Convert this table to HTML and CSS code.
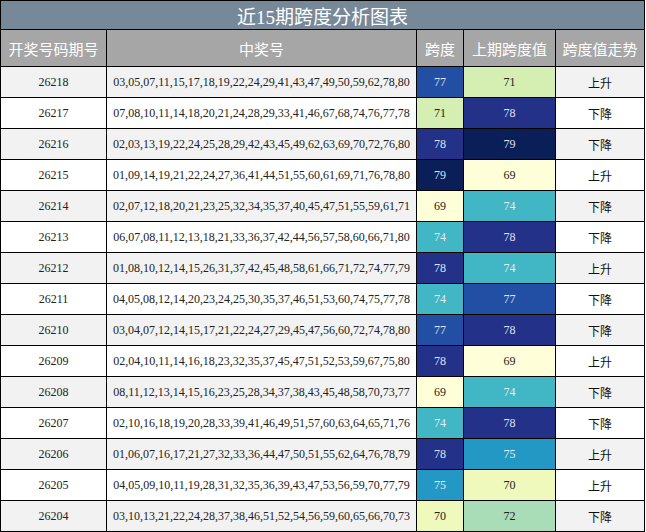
FILE: index.html
```html
<!DOCTYPE html>
<html lang="zh">
<head>
<meta charset="utf-8">
<title>近15期跨度分析图表</title>
<link rel="stylesheet" href="styles.css">
</head>
<body>
<div class="chart">
  <div class="title">近15期跨度分析图表</div>
  <div class="hd">开奖号码期号</div>
  <div class="hd">中奖号</div>
  <div class="hd">跨度</div>
  <div class="hd">上期跨度值</div>
  <div class="hd">跨度值走势</div>

  <div class="cell g">26218</div><div class="cell g">03,05,07,11,15,17,18,19,22,24,29,41,43,47,49,50,59,62,78,80</div><div class="cell v77">77</div><div class="cell v71">71</div><div class="cell g cn">上升</div>
  <div class="cell">26217</div><div class="cell">07,08,10,11,14,18,20,21,24,28,29,33,41,46,67,68,74,76,77,78</div><div class="cell v71">71</div><div class="cell v78">78</div><div class="cell cn">下降</div>
  <div class="cell g">26216</div><div class="cell g">02,03,13,19,22,24,25,28,29,42,43,45,49,62,63,69,70,72,76,80</div><div class="cell v78">78</div><div class="cell v79">79</div><div class="cell g cn">下降</div>
  <div class="cell">26215</div><div class="cell">01,09,14,19,21,22,24,27,36,41,44,51,55,60,61,69,71,76,78,80</div><div class="cell v79">79</div><div class="cell v69">69</div><div class="cell cn">上升</div>
  <div class="cell g">26214</div><div class="cell g">02,07,12,18,20,21,23,25,32,34,35,37,40,45,47,51,55,59,61,71</div><div class="cell v69">69</div><div class="cell v74">74</div><div class="cell g cn">下降</div>
  <div class="cell">26213</div><div class="cell">06,07,08,11,12,13,18,21,33,36,37,42,44,56,57,58,60,66,71,80</div><div class="cell v74">74</div><div class="cell v78">78</div><div class="cell cn">下降</div>
  <div class="cell g">26212</div><div class="cell g">01,08,10,12,14,15,26,31,37,42,45,48,58,61,66,71,72,74,77,79</div><div class="cell v78">78</div><div class="cell v74">74</div><div class="cell g cn">上升</div>
  <div class="cell">26211</div><div class="cell">04,05,08,12,14,20,23,24,25,30,35,37,46,51,53,60,74,75,77,78</div><div class="cell v74">74</div><div class="cell v77">77</div><div class="cell cn">下降</div>
  <div class="cell g">26210</div><div class="cell g">03,04,07,12,14,15,17,21,22,24,27,29,45,47,56,60,72,74,78,80</div><div class="cell v77">77</div><div class="cell v78">78</div><div class="cell g cn">下降</div>
  <div class="cell">26209</div><div class="cell">02,04,10,11,14,16,18,23,32,35,37,45,47,51,52,53,59,67,75,80</div><div class="cell v78">78</div><div class="cell v69">69</div><div class="cell cn">上升</div>
  <div class="cell g">26208</div><div class="cell g">08,11,12,13,14,15,16,23,25,28,34,37,38,43,45,48,58,70,73,77</div><div class="cell v69">69</div><div class="cell v74">74</div><div class="cell g cn">下降</div>
  <div class="cell">26207</div><div class="cell">02,10,16,18,19,20,28,33,39,41,46,49,51,57,60,63,64,65,71,76</div><div class="cell v74">74</div><div class="cell v78">78</div><div class="cell cn">下降</div>
  <div class="cell g">26206</div><div class="cell g">01,06,07,16,17,21,27,32,33,36,44,47,50,51,55,62,64,76,78,79</div><div class="cell v78">78</div><div class="cell v75">75</div><div class="cell g cn">上升</div>
  <div class="cell">26205</div><div class="cell">04,05,09,10,11,19,28,31,32,35,36,39,43,47,53,56,59,70,77,79</div><div class="cell v75">75</div><div class="cell v70">70</div><div class="cell cn">上升</div>
  <div class="cell g">26204</div><div class="cell g">03,10,13,21,22,24,28,37,38,46,51,52,54,56,59,60,65,66,70,73</div><div class="cell v70">70</div><div class="cell v72">72</div><div class="cell g cn">下降</div>
</div>
</body>
</html>
```

FILE: styles.css
```css
html, body {
  margin: 0;
  padding: 0;
  background: #ffffff;
}

.chart {
  width: 643px;
  display: grid;
  grid-template-columns: 105px 309px 46px 91px 88px;
  grid-template-rows: 28px 36px repeat(15, 30px);
  gap: 1px;
  padding: 1px;
  background: #000000;
  font-family: "Liberation Serif", "Noto Sans CJK SC", serif;
}

.title {
  grid-column: 1 / -1;
  background: #778899;
  color: #ffffff;
  font-family: "Liberation Serif", "Noto Sans CJK SC", serif;
  font-size: 19px;
  display: flex;
  align-items: center;
  justify-content: center;
}

.hd {
  background: #a6a6a6;
  color: #ffffff;
  font-family: "Noto Sans CJK SC", sans-serif;
  font-size: 15px;
  display: flex;
  align-items: center;
  justify-content: center;
}

.cell {
  background: #ffffff;
  color: #222222;
  font-size: 12px;
  display: flex;
  align-items: center;
  justify-content: center;
  white-space: nowrap;
}

.cell.g { background: #f2f2f2; }
.cell.cn { font-family: "Noto Sans CJK SC", sans-serif; font-size: 12px; color: #111111; }

.v69 { background: #fefed8 !important; color: #222; }
.v70 { background: #eff9bb !important; color: #222; }
.v71 { background: #d5efb3 !important; color: #222; }
.v72 { background: #a9ddb7 !important; color: #222; }
.v74 { background: #41b6c4 !important; color: #e6eef2; }
.v75 { background: #2398c4 !important; color: #e6eef2; }
.v77 { background: #224ea3 !important; color: #dfe4ee; }
.v78 { background: #233189 !important; color: #dfe4ee; }
.v79 { background: #0a1e58 !important; color: #dfe4ee; }
```
